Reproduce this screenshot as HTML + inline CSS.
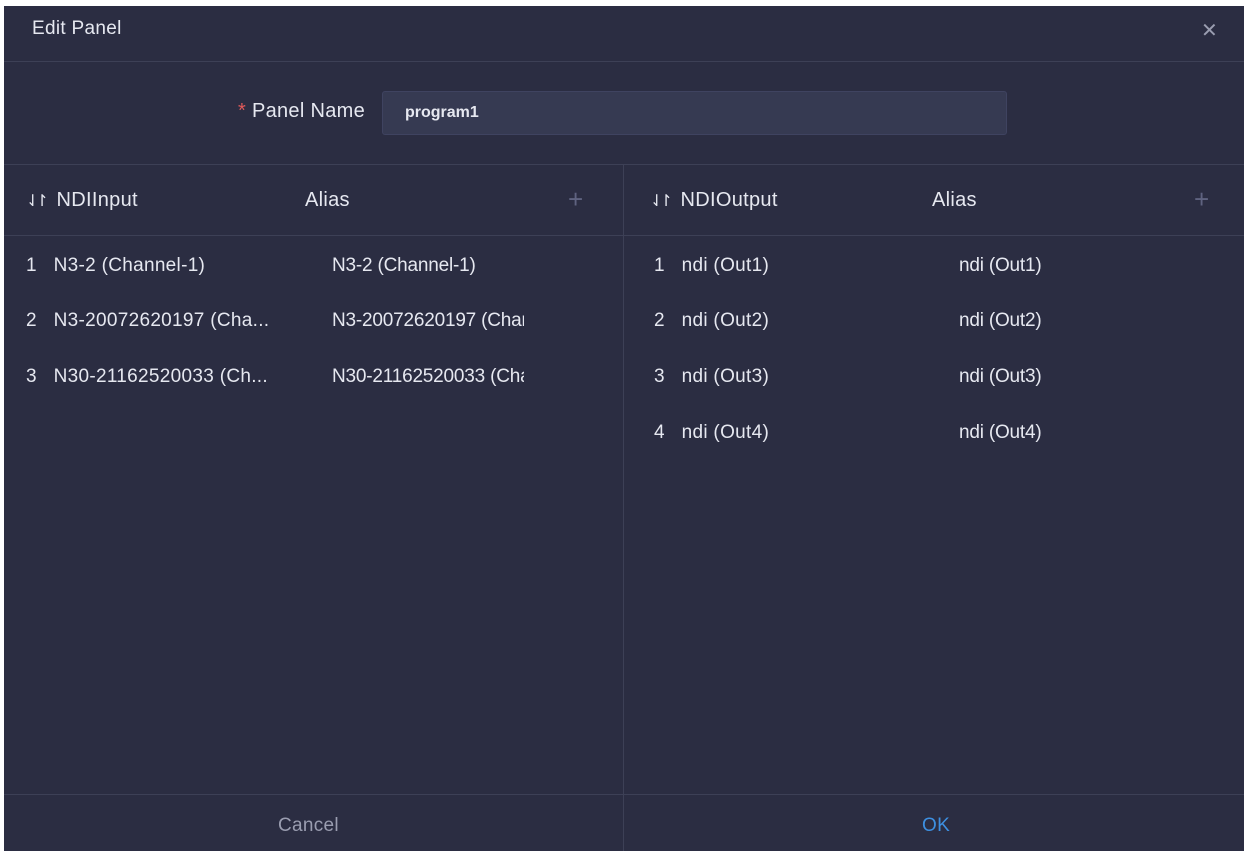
<!DOCTYPE html>
<html><head><style>
*{margin:0;padding:0;box-sizing:border-box}
body{width:1248px;height:856px;background:#fff;font-family:"Liberation Sans",Arial,sans-serif;position:relative;overflow:hidden}
.d{position:absolute;left:4px;top:6px;width:1240px;height:845px;background:#2b2d42;color:#e6e8f0}
.a{position:absolute}
.hl{position:absolute;height:1px;background:#3d4056}
.vl{position:absolute;width:1px;background:#3d4056}
.t{font-size:19px;white-space:nowrap;letter-spacing:0.3px}
.s{font-size:19px;letter-spacing:-0.2px}
</style></head><body>
<div class="d">
<div class="a t" style="left:28px;top:12px;font-size:19px">Edit Panel</div>
<div class="a" style="left:1197px;top:12px;color:#9a9db0;font-size:20px;font-weight:100">✕</div>
<div class="hl" style="left:0;top:55px;width:1240px"></div>
<div class="a t" style="left:234px;top:94px;font-size:20px"><span style="color:#e05a5a">*</span> Panel Name</div>
<div class="a" style="left:378px;top:85px;width:625px;height:44px;background:#363a52;border-radius:3px;border:1px solid #3f4360"></div>
<div class="a" style="left:401px;top:98px;font-size:16px;font-weight:bold">program1</div>
<div class="hl" style="left:0;top:158px;width:1240px"></div>
<div class="vl" style="left:619px;top:158px;height:687px"></div>
<div class="hl" style="left:0;top:229px;width:1240px"></div>
<div class="hl" style="left:0;top:788px;width:1240px"></div>

<div class="a t" style="left:22px;top:183px;font-size:20px"><span style="letter-spacing:-4px;font-size:16px">⇃↾</span>&nbsp; NDIInput</div>
<div class="a t" style="left:301px;top:183px;font-size:20px">Alias</div>
<div class="a" style="left:564px;top:178px;color:#5f6380;font-size:26px;font-weight:100">+</div>
<div class="a t" style="left:646px;top:183px;font-size:20px"><span style="letter-spacing:-4px;font-size:16px">⇃↾</span>&nbsp; NDIOutput</div>
<div class="a t" style="left:928px;top:183px;font-size:20px">Alias</div>
<div class="a" style="left:1190px;top:178px;color:#5f6380;font-size:26px">+</div>

<div class="a t" style="left:22px;top:249px">1&nbsp;&nbsp; N3-2 (Channel-1)</div>
<div class="a t" style="left:22px;top:304px">2&nbsp;&nbsp; N3-20072620197 (Cha...</div>
<div class="a t" style="left:22px;top:360px">3&nbsp;&nbsp; N30-21162520033 (Ch...</div>
<div class="a t s" style="left:328px;top:249px">N3-2 (Channel-1)</div>
<div class="a t s" style="left:328px;top:304px;width:192px;overflow:hidden">N3-20072620197 (Channel-2)</div>
<div class="a t s" style="left:328px;top:360px;width:192px;overflow:hidden">N30-21162520033 (Channel-1)</div>

<div class="a t" style="left:650px;top:249px">1&nbsp;&nbsp; ndi (Out1)</div>
<div class="a t" style="left:650px;top:304px">2&nbsp;&nbsp; ndi (Out2)</div>
<div class="a t" style="left:650px;top:360px">3&nbsp;&nbsp; ndi (Out3)</div>
<div class="a t" style="left:650px;top:416px">4&nbsp;&nbsp; ndi (Out4)</div>
<div class="a t s" style="left:955px;top:249px">ndi (Out1)</div>
<div class="a t s" style="left:955px;top:304px">ndi (Out2)</div>
<div class="a t s" style="left:955px;top:360px">ndi (Out3)</div>
<div class="a t s" style="left:955px;top:416px">ndi (Out4)</div>

<div class="a t" style="left:274px;top:809px;color:#9a9db0">Cancel</div>
<div class="a t" style="left:918px;top:809px;color:#3d8fe0">OK</div>
</div>
</body></html>
